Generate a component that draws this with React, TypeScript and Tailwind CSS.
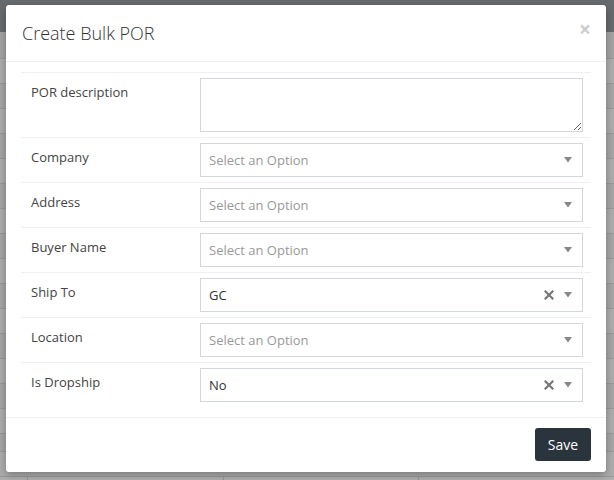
import React from "react";

const font = { fontFamily: '"Open Sans", "Liberation Sans", sans-serif' };

function Arrow() {
  return (
    <svg width="8" height="6" viewBox="0 0 8 6" className="shrink-0">
      <path d="M0 0h8L4 5.5z" fill="#888" />
    </svg>
  );
}

function Clear() {
  return (
    <svg width="10" height="10" viewBox="0 0 10 10" className="shrink-0">
      <path d="M1.5 1.5l7 7M8.5 1.5l-7 7" stroke="#777" strokeWidth="2.2" strokeLinecap="square" />
    </svg>
  );
}

function Select({ value, clearable }: { value?: string; clearable?: boolean }) {
  return (
    <div className="flex h-[34px] w-[383px] items-center border border-[#d2d6de] bg-white pl-[8px] pr-[10px]">
      <span className={`flex-1 pt-[2px] text-[13px] ${value ? "text-[#333]" : "text-[#999]"}`}>
        {value || "Select an Option"}
      </span>
      {clearable && (
        <span className="mr-[10px] flex items-center">
          <Clear />
        </span>
      )}
      <Arrow />
    </div>
  );
}

function Row({ label, children }: { label: string; children: React.ReactNode }) {
  return (
    <div className="flex border-t border-[#f0f0f0] py-[5px] pl-[10px] pr-[8px]">
      <div className="w-[169px] pt-[4px] text-[13px] leading-[20px] text-[#444]">{label}</div>
      {children}
    </div>
  );
}

const bgRows = [27, 25, 25, 25, 25, 25, 25, 25, 25, 25, 25, 25, 25, 25, 25, 25, 18, 25];

export default function App() {
  return (
    <div className="relative h-[480px] w-[614px] overflow-hidden bg-[#aaaaaa]" style={font}>
      {/* dimmed page behind the modal */}
      <div className="h-[32px] bg-[#676b6e]" />
      <div>
        {bgRows.map((h, i) => (
          <div
            key={i}
            className={`border-b border-[#999] ${i === 0 ? "bg-[#a3a3a3]" : i % 2 ? "bg-[#adadad]" : "bg-[#a6a6a6]"}`}
            style={{ height: h }}
          />
        ))}
        <div className="flex h-[25px] bg-[#b0b0b0] pl-[27px] text-[13px] text-[#555]">
          <div className="flex w-[200px] items-center border-l border-[#999] pl-[5px]">6076692</div>
          <div className="flex w-[200px] items-center border-l border-[#999] pl-[3px]">TALLEY INC</div>
          <div className="flex w-[200px] items-center border-l border-[#999] pl-[4px]">PO BOX 511390</div>
        </div>
      </div>

      {/* modal */}
      <div className="absolute left-[6px] top-[5px] w-[600px] rounded-[3px] bg-white shadow-[0_3px_9px_rgba(0,0,0,0.3)]">
        <div className="flex h-[57px] items-center justify-between border-b border-[#eeeeee] pl-[16px] pr-[15px]">
          <h4 className="pt-[1px] text-[18px] font-light text-[#333]">Create Bulk POR</h4>
          <span className="-mt-[8px] text-[21px] font-bold leading-none text-black opacity-20">×</span>
        </div>
        <div className="px-[15px] pb-[10px] pt-[10px]">
          <Row label="POR description">
            <textarea className="block h-[54px] w-[383px] border border-[#d2d6de] bg-white outline-none" />
          </Row>
          <Row label="Company">
            <Select />
          </Row>
          <Row label="Address">
            <Select />
          </Row>
          <Row label="Buyer Name">
            <Select />
          </Row>
          <Row label="Ship To">
            <Select value="GC" clearable />
          </Row>
          <Row label="Location">
            <Select />
          </Row>
          <Row label="Is Dropship">
            <Select value="No" clearable />
          </Row>
        </div>
        <div className="flex justify-end border-t border-[#f0f0f0] pb-[11px] pr-[15px] pt-[10px]">
          <button className="h-[33px] w-[56px] rounded-[3px] bg-[#2a343d] text-[14px] text-white">Save</button>
        </div>
      </div>
    </div>
  );
}
